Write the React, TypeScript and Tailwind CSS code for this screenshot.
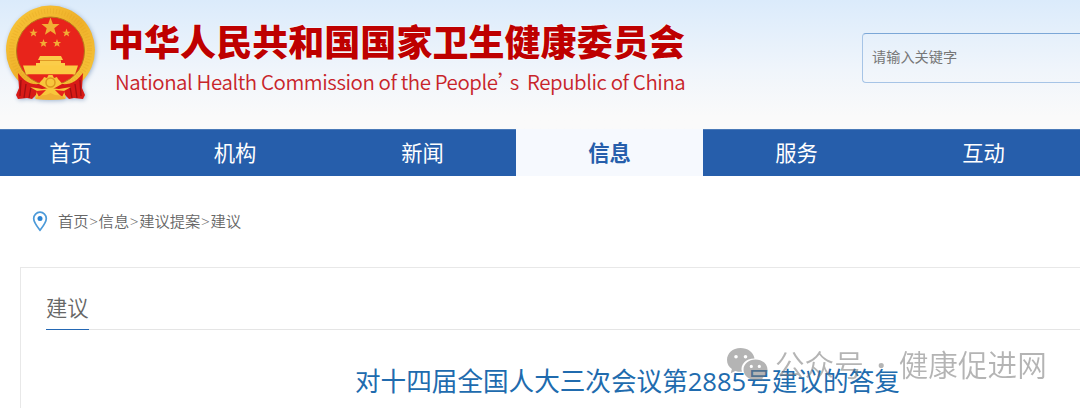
const NAV = [
  { label: "首页", width: "w-[141px]" },
  { label: "机构", width: "w-[188px]" },
  { label: "新闻", width: "w-[187px]" },
  { label: "信息", width: "w-[187px]", active: true },
  { label: "服务", width: "w-[187px]" },
  { label: "互动", width: "w-[187px]" },
];

const CRUMBS = ["首页", "信息", "建议提案", "建议"];

const STAR = "M0-1 .25-.309.951-.309.4.13.588.809 0 .42-.588.809-.4.13-.951-.309-.25-.309Z";

const STARS = [
  { x: 50.5, y: 27, r: 9.5 },
  { x: 33.5, y: 33, r: 4.4 },
  { x: 66.5, y: 33, r: 4.4 },
  { x: 43.5, y: 43.3, r: 4.4 },
  { x: 57, y: 43.3, r: 4.4 },
];

export default function App() {
  return (
    <div className="h-[408px] w-full overflow-hidden bg-white font-['Open_Sans','Noto_Sans_CJK_SC',sans-serif]">
      <Header />
      <nav className="flex h-[47px] border-t border-[#4a7ab8] bg-[#265eab]">
        {NAV.map(item => (
          <a
            key={item.label}
            className={`flex flex-shrink-0 items-center justify-center text-[21.3px] ${item.width} ${
              item.active ? "-mt-px h-[47px] bg-[#f6f9fe] pt-px font-bold text-[#265eab]" : "h-[46px] text-white"
            }`}>
            {item.label}
          </a>
        ))}
      </nav>
      <Breadcrumb />
      <Article />
    </div>
  );
}

function Header() {
  return (
    <header className="flex h-[129px] justify-between bg-linear-to-b from-[#dbebfb] via-[#f0f5fb] via-55% to-[#fafafa] to-90%">
      <div className="flex">
        <Emblem />
        <div className="w-[600px] pt-[13px] font-['Noto_Sans_CJK_SC',sans-serif] whitespace-nowrap">
          <h1 className="-ml-[2px] text-[36px] leading-[54px] font-black tracking-[0.05px] text-[#be0000] [text-shadow:0_0_2px_#fff,0_0_1px_#fff]">
            中华人民共和国国家卫生健康委员会
          </h1>
          <p className="-mt-px ml-[5px] text-[20.5px] leading-[30px] font-[350] tracking-[-0.43px] text-[#c8242a]">
            National Health Commission of the People<span className="inline-block w-[12px]">’</span>s&nbsp; Republic of China
          </p>
        </div>
      </div>
      <div className="mt-[33px] flex h-[50px] w-[218px] flex-shrink-0 items-center rounded-l border border-r-0 border-[#a6c4e6] border-t-[#7ba7d7] pb-[2px] pl-[9px] text-[14.2px] text-[#777]">
        请输入关键字
      </div>
    </header>
  );
}

function Emblem() {
  return (
    <svg className="h-[110px] w-[110px] flex-shrink-0 drop-shadow-[1px_1px_2px_#9fb4d0]" viewBox="0 0 110 110">
      <defs>
        <linearGradient id="gold" x1="0" y1="0" x2="1" y2="1">
          <stop offset="0" stopColor="#f9c83a" />
          <stop offset=".5" stopColor="#efb02a" />
          <stop offset="1" stopColor="#f8c83c" />
        </linearGradient>
      </defs>
      <circle cx="50.5" cy="50" r="44.5" fill="url(#gold)" />
      <circle cx="50.5" cy="50" r="39" fill="none" stroke="#dc9a1c" strokeWidth="5" strokeDasharray="1 2" opacity=".25" />
      <circle cx="50.5" cy="51" r="34" fill="#e8241b" stroke="#b9771b" strokeWidth="1" />
      {STARS.map((s, i) => (
        <path key={i} d={STAR} transform={`translate(${s.x} ${s.y}) scale(${s.r})`} fill="#f2ad35" />
      ))}
      {/* gate tower */}
      <path d="M40 56h21l2 4h-2v3h4v3H36v-3h4v-3h-2z" fill="#fbcd49" />
      <path d="M40 60.500h21" stroke="#d98c1c" strokeWidth=".8" />
      <path d="M23 65.500h55l-3 9H26z" fill="#fbcb43" />
      <path d="M28 74.500h45l-9 7H37z" fill="#e8241b" />
      {/* gear */}
      <path d="M39 84c2-4 4-4 5-7l3 1 1.500-3h4L54 78l3-1c1 3 3 3 5 7l-11 6z" fill="#f8c63b" />
      <circle cx="50.500" cy="82.500" r="4.500" fill="none" stroke="#dc961f" strokeWidth="1.500" />
      {/* drapery */}
      <path d="M18 73c6 8 12 12 21 11l9 5-8 2-8 8-5-1-9 1-2-4 3-7z" fill="#d81a17" />
      <path d="M83 73c-6 8-12 12-21 11l-9 5 8 2 8 8 5-1 9 1 2-4-3-7z" fill="#d81a17" />
      <path d="m21 80-1 16M26 84l-2 14M31 87l-2 11M80 80l1 16M75 84l2 14M70 87l2 11" stroke="#a10f12" strokeWidth="1.300" />
      <path d="m30 87 12 2 8.500-1 8.500 1 12-2-7 4 2 7H35l2-7z" fill="#f8c63b" />
      <path d="m36 91 10-1-7 7zM65 91l-10-1 7 7z" fill="#e5231b" />
      <path d="M35 99q3-4 11-4l4.500-2 4.500 2q8 0 11 4-15.500 2-31 0z" fill="#f0b034" />
    </svg>
  );
}

function Breadcrumb() {
  return (
    <div className="flex h-[91px] items-center pl-[32px] text-[15.3px] font-[350] text-[#666]">
      <svg className="mr-[10px] h-[21px] w-[16px]" viewBox="0 0 16 21" fill="none">
        <path d="M8 1.200a6.300 6.300 0 0 0-6.300 6.300C1.700 11.500 5.500 16 8 19.200c2.500-3.200 6.300-7.700 6.300-11.700A6.300 6.300 0 0 0 8 1.200Z" stroke="#4c9ad9" strokeWidth="1.700" />
        <circle cx="8" cy="7.500" r="2.500" fill="#2b83d2" />
      </svg>
      {CRUMBS.map((crumb, i) => (
        <span key={crumb}>
          {i > 0 && <span className="inline-block w-[10px] text-center">&gt;</span>}
          {crumb}
        </span>
      ))}
    </div>
  );
}

function Article() {
  return (
    <main className="relative ml-[20px] h-[141px] border-t border-l border-[#e8e8e8] pl-[25px]">
      <div className="flex h-[62px] border-b border-[#e5e5e5]">
        <h2 className="h-[62px] border-b border-b-[#2468b4] pt-[24px] text-[21.3px] leading-[32px] font-[350] text-[#666]">建议</h2>
      </div>
      <h3 className="mt-[32px] ml-[309px] text-[25.6px] leading-[39px] whitespace-nowrap text-[#206bae]">
        对十四届全国人大三次会议第2885号建议的答复
      </h3>
      <Watermark />
    </main>
  );
}

function Watermark() {
  return (
    <div className="absolute top-[79px] left-[705px] flex items-center text-[29.6px] leading-[36px] font-[350] whitespace-nowrap text-[#777] opacity-55">
      <svg className="mr-[7px] h-[36px] w-[42px]" viewBox="0 0 42 36">
        <path
          fillRule="evenodd"
          fill="#777"
          d="M14.500 1C6.500 1 1 6.500 1 13c0 3.800 1.900 6.900 4.900 9L4.700 26.300l4.600-2.300c2.300.7 4.400.9 6.600.8-2-7.500 4-13.500 12.600-13.400C27.300 5 21.500 1 14.500 1ZM10 7.900a1.800 1.800 0 1 0 0 3.600 1.800 1.800 0 0 0 0-3.600Zm9.500 0a1.800 1.800 0 1 0 0 3.600 1.800 1.800 0 0 0 0-3.600Z"
        />
        <path
          fillRule="evenodd"
          fill="#777"
          d="M29.500 12.500c-6.700 0-12 4.500-12 10.200s5.300 10.200 12 10.200c1.500 0 2.900-.2 4.200-.6l3.700 2-1-3.200c3.100-1.900 5.100-4.900 5.100-8.400 0-5.700-5.300-10.200-12-10.200Zm-4.200 5.300a1.600 1.600 0 1 0 0 3.200 1.600 1.600 0 0 0 0-3.200Zm8 0a1.600 1.600 0 1 0 0 3.200 1.600 1.600 0 0 0 0-3.200Z"
        />
      </svg>
      公众号<span className="w-[35px] text-center font-bold">·</span>健康促进网
    </div>
  );
}
